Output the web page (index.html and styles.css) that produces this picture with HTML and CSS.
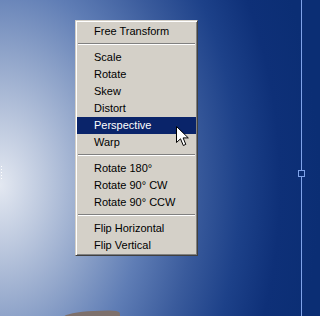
FILE: index.html
```html
<!DOCTYPE html>
<html lang="en">
<head>
    <meta charset="UTF-8">
    <title>Transform menu</title>
    <link rel="stylesheet" href="styles.css">
</head>
<body>
    <div class="canvas">
        <!-- guide line with handle -->
        <div class="guide"></div>
        <div class="handle"></div>
        <div class="dots"></div>
        <div class="roof"></div>

        <!-- context menu -->
        <ul class="menu">
            <li class="item">Free Transform</li>
            <li class="sep"></li>
            <li class="item">Scale</li>
            <li class="item">Rotate</li>
            <li class="item">Skew</li>
            <li class="item">Distort</li>
            <li class="item active">Perspective</li>
            <li class="item">Warp</li>
            <li class="sep"></li>
            <li class="item">Rotate 180°</li>
            <li class="item">Rotate 90° CW</li>
            <li class="item">Rotate 90° CCW</li>
            <li class="sep"></li>
            <li class="item">Flip Horizontal</li>
            <li class="item">Flip Vertical</li>
        </ul>

        <svg class="cursor" width="14" height="22" viewBox="0 0 14 22">
            <path d="M0.5 0.5 V16.5 L4.5 12.8 L7.3 19.5 L9.8 18.4 L7.1 11.9 H12.3 Z" fill="#fff" stroke="#000" stroke-width="1" stroke-linejoin="miter"/>
        </svg>
    </div>
</body>
</html>
```

FILE: styles.css
```css
body {
    margin: 0;
    font-family: "Liberation Sans", Arial, sans-serif;
}

.canvas {
    position: relative;
    width: 320px;
    height: 316px;
    overflow: hidden;
    background-color: #0b2e74;
    background-image: radial-gradient(ellipse 300px 420px at 0 185px,
        #e3e8f1 0,
        #bcc8de 45px,
        #8ea3c9 95px,
        #5f7db5 145px,
        #3a5b9c 195px,
        #1d4189 240px,
        #0e3078 280px,
        #0b2e74 320px);
}

.guide {
    position: absolute;
    left: 301px;
    top: 0;
    width: 1px;
    height: 316px;
    background: #7fa3ea;
}

.handle {
    position: absolute;
    left: 298px;
    top: 170px;
    width: 5px;
    height: 5px;
    border: 1px solid #7fa3ea;
    background: #0b2e74;
}

.dots {
    position: absolute;
    left: 1px;
    top: 166px;
    width: 1px;
    height: 15px;
    background: repeating-linear-gradient(#fff 0 1px, transparent 1px 3px);
}

.roof {
    position: absolute;
    left: 64px;
    top: 311px;
    width: 56px;
    height: 12px;
    background: #7d706c;
    border-radius: 30px 12px 0 0 / 5px 3px 0 0;
    transform: rotate(-2deg);
}

.menu {
    position: absolute;
    left: 75px;
    top: 20px;
    width: 119px;
    margin: 0;
    padding: 2px 1px 1px;
    list-style: none;
    background: #d4d0c8;
    border: 1px solid;
    border-color: #d4d0c8 #404040 #404040 #d4d0c8;
    box-shadow: inset 1px 1px #fff, inset -1px -1px #808080;
    font-size: 11px;
    color: #000;
}

.item {
    height: 17px;
    line-height: 17px;
    padding-left: 17px;
    white-space: nowrap;
}

.item.active {
    background: #0a246a;
    color: #fff;
}

.sep {
    height: 1px;
    margin: 3px 1px 4px;
    background: #808080;
    border-bottom: 1px solid #fff;
}

.cursor {
    position: absolute;
    left: 176px;
    top: 126px;
}
```
